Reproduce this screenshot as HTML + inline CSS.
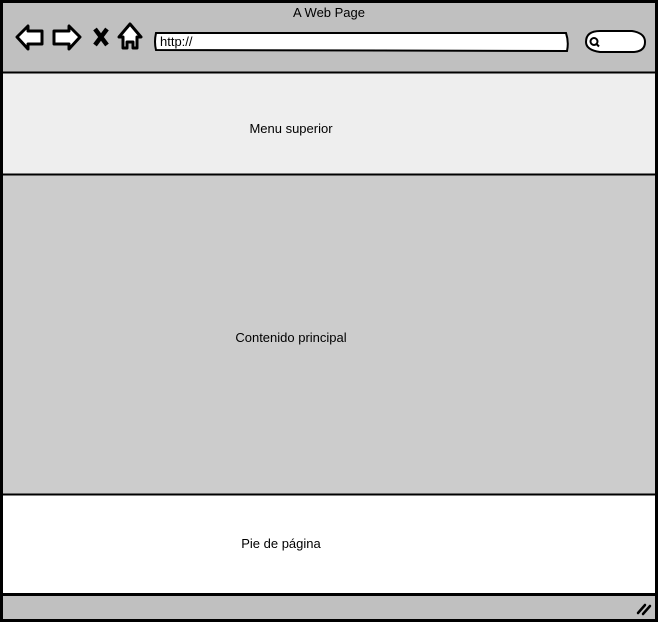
<!DOCTYPE html>
<html><head><style>
html,body{margin:0;padding:0;width:658px;height:623px;overflow:hidden;background:#fff}
svg{display:block}
text{font-family:"Liberation Sans",sans-serif;font-size:13px;fill:#000}
</style></head><body>
<svg width="658" height="623" viewBox="0 0 658 623">
<rect x="1.5" y="1.5" width="655" height="619" fill="#c0c0c0" stroke="#000" stroke-width="3"/>
<rect x="3" y="73" width="652" height="101" fill="#eeeeee"/>
<rect x="3" y="175" width="652" height="319" fill="#cccccc"/>
<rect x="3" y="495" width="652" height="99" fill="#ffffff"/>
<line x1="2" y1="72.5" x2="656" y2="72.5" stroke="#000" stroke-width="2"/>
<line x1="2" y1="174.5" x2="656" y2="174.5" stroke="#000" stroke-width="2"/>
<line x1="2" y1="494.5" x2="656" y2="494.5" stroke="#000" stroke-width="2"/>
<line x1="2" y1="594.5" x2="656" y2="594.5" stroke="#000" stroke-width="3"/>
<text x="329" y="17" text-anchor="middle">A Web Page</text>
<path d="M17 37 L28 26 L28 31 L42 31 L42 44 L28 44 L28 49 Z" fill="#fff" stroke="#000" stroke-width="3" stroke-linejoin="round"/>
<path d="M80 37 L69 26 L69 31 L54 31 L54 44 L69 44 L69 49 Z" fill="#fff" stroke="#000" stroke-width="3" stroke-linejoin="round"/>
<path d="M95 29 L107 45 M107 29 L95 45" stroke="#000" stroke-width="4.5"/>
<path d="M130 24 L141 37 L137 37 L137 48 L133 48 L133 42 L127 42 L127 48 L123 48 L123 37 L119 37 Z" fill="#fff" stroke="#000" stroke-width="3" stroke-linejoin="round"/>
<path d="M156 33 L566 33 Q569 42 567 51 L156 50 Q154 42 156 33 Z" fill="#fff" stroke="#000" stroke-width="2"/>
<text x="160" y="46">http://</text>
<path d="M600 31 L632 31 Q645 33 645 42 Q645 52 632 52 L600 52 Q586 50 586 42 Q586 31 600 31 Z" fill="#fff" stroke="#000" stroke-width="2"/>
<circle cx="594" cy="41.5" r="3.5" fill="none" stroke="#000" stroke-width="2"/>
<line x1="596.5" y1="44" x2="599" y2="46.5" stroke="#000" stroke-width="2"/>
<text x="291" y="133" text-anchor="middle">Menu superior</text>
<text x="291" y="342" text-anchor="middle">Contenido principal</text>
<text x="281" y="548" text-anchor="middle">Pie de página</text>
<path d="M638 613 L645 605 M643 614 L650 606" stroke="#000" stroke-width="2.5" stroke-linecap="round"/>
</svg>
</body></html>
